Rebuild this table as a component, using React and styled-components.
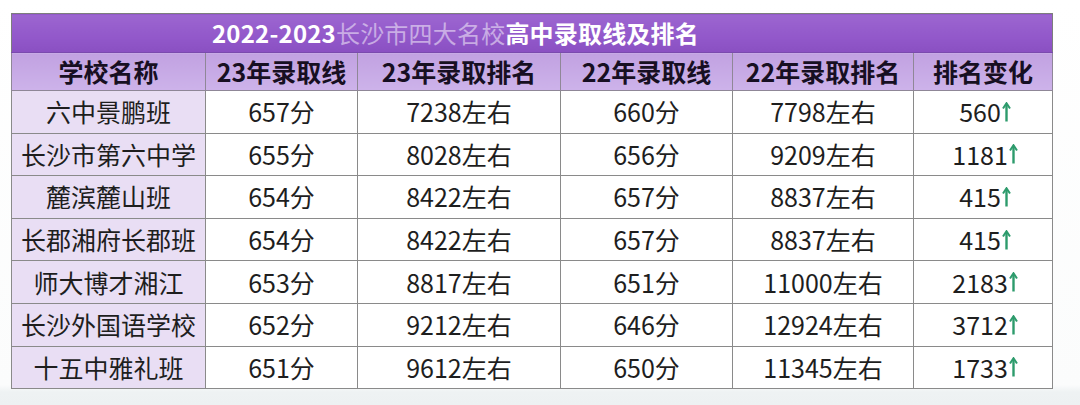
import React from 'react'
import styled, { createGlobalStyle } from 'styled-components'

const GlobalStyle = createGlobalStyle`
  html, body {
    margin: 0;
    padding: 0;
  }
  body {
    font-family: "Noto Sans CJK SC", "Noto Sans", sans-serif;
    background: #ffffff;
  }
`

const Page = styled.div`
  width: 1080px;
  height: 405px;
  box-sizing: border-box;
  padding: 13px 0 0 11px;
  background: linear-gradient(180deg, #ffffff 0, #fbfcfc 385px, #eef2f3 392px, #edf1f2 100%);
  overflow: hidden;
`

const Table = styled.table`
  width: 1041px;
  border-collapse: collapse;
  table-layout: fixed;
  border: 1px solid #7d7d7d;
`

const TitleCell = styled.th`
  height: 38px;
  padding: 0 0 0 200px;
  text-align: left;
  color: #ffffff;
  font-size: 24px;
  font-weight: 700;
  line-height: 38px;
  letter-spacing: 0.2px;
  background: linear-gradient(180deg, #9c66d0 0%, #9258ca 60%, #8a50c2 100%);
  border-bottom: 1px solid #7a4aae;
  white-space: nowrap;
`

const Faded = styled.span`
  color: rgba(255, 255, 255, 0.5);
  font-weight: 400;
`

const HeadCell = styled.th`
  height: 37px;
  padding: 0;
  text-align: center;
  color: #170f22;
  font-size: 25px;
  font-weight: 700;
  line-height: 37px;
  background: linear-gradient(180deg, #c1a1e1 0%, #cdb3ea 100%);
  border: 1px solid #8f8797;
  white-space: nowrap;
`

const Cell = styled.td`
  height: 41.6px;
  padding: 0;
  text-align: center;
  color: #1e1e1e;
  font-size: 25px;
  font-weight: 400;
  line-height: 41px;
  background: ${p => (p.name ? '#e9def4' : '#ffffff')};
  border: 1px solid #8a8a8a;
  white-space: nowrap;
`

const Change = styled.span`
  display: inline-flex;
  align-items: center;
  gap: 1px;
  padding-left: 4px;
`

const columns = [194, 152, 203, 172, 181, 139]

const headers = ['学校名称', '23年录取线', '23年录取排名', '22年录取线', '22年录取排名', '排名变化']

const rows = [
  ['六中景鹏班', '657分', '7238左右', '660分', '7798左右', '560'],
  ['长沙市第六中学', '655分', '8028左右', '656分', '9209左右', '1181'],
  ['麓滨麓山班', '654分', '8422左右', '657分', '8837左右', '415'],
  ['长郡湘府长郡班', '654分', '8422左右', '657分', '8837左右', '415'],
  ['师大博才湘江', '653分', '8817左右', '651分', '11000左右', '2183'],
  ['长沙外国语学校', '652分', '9212左右', '646分', '12924左右', '3712'],
  ['十五中雅礼班', '651分', '9612左右', '650分', '11345左右', '1733'],
]

const UpArrow = () => (
  <svg width="9" height="20" viewBox="0 0 9 20" aria-hidden="true">
    <path d="M4.5 19.5V2.5" stroke="#2d9b6c" strokeWidth="2.4" fill="none" />
    <path d="M1 6.5L4.5 1.2L8 6.5" stroke="#2d9b6c" strokeWidth="2" fill="none" />
  </svg>
)

export default function App() {
  return (
    <>
      <GlobalStyle />
      <Page>
        <Table>
          <colgroup>
            {columns.map((w, i) => (
              <col key={i} style={{ width: w }} />
            ))}
          </colgroup>
          <thead>
            <tr>
              <TitleCell colSpan={6}>
                2022-2023<Faded>长沙市四大名校</Faded>高中录取线及排名
              </TitleCell>
            </tr>
            <tr>
              {headers.map(h => (
                <HeadCell key={h}>{h}</HeadCell>
              ))}
            </tr>
          </thead>
          <tbody>
            {rows.map((r, i) => (
              <tr key={i}>
                <Cell name>{r[0]}</Cell>
                <Cell>{r[1]}</Cell>
                <Cell>{r[2]}</Cell>
                <Cell>{r[3]}</Cell>
                <Cell>{r[4]}</Cell>
                <Cell>
                  <Change>
                    {r[5]}
                    <UpArrow />
                  </Change>
                </Cell>
              </tr>
            ))}
          </tbody>
        </Table>
      </Page>
    </>
  )
}
